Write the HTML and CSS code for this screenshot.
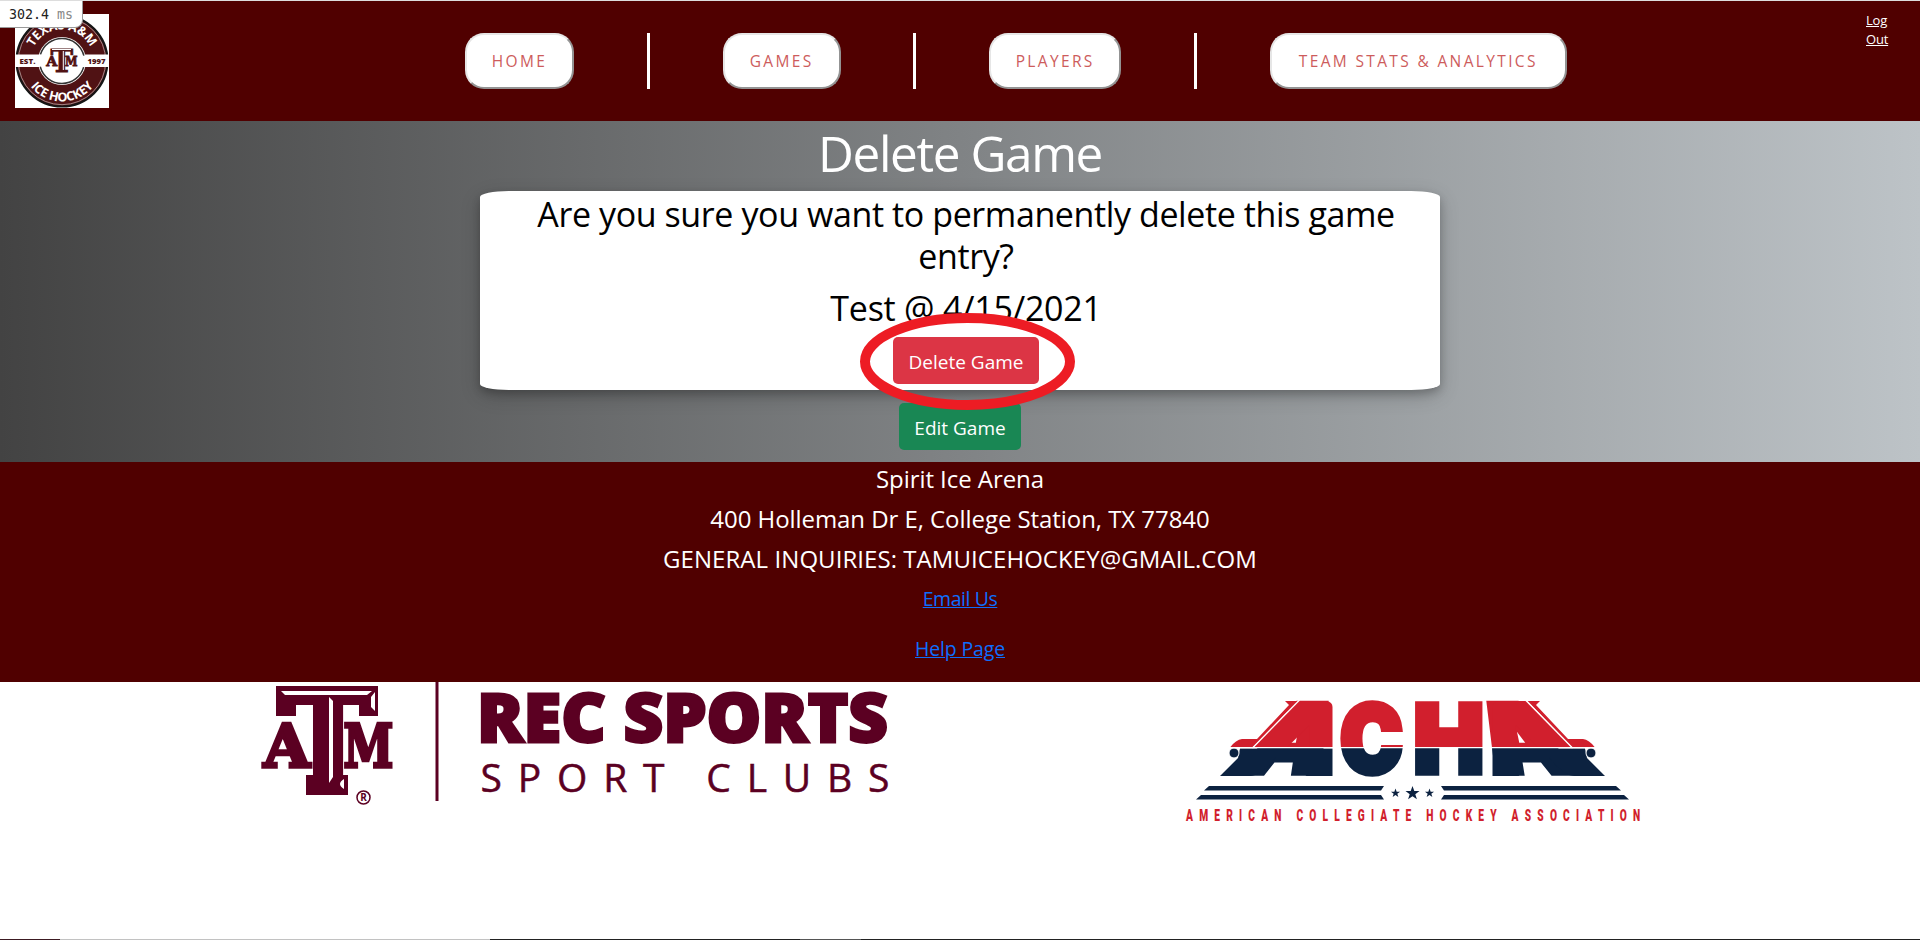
FILE: index.html
```html
<!DOCTYPE html>
<html lang="en">
<head>
<meta charset="utf-8">
<title>Delete Game</title>
<link rel="stylesheet" href="styles.css">
</head>
<body>
<div class="page">
  <div class="timer">302.4 <span class="timer-unit">ms</span></div>
  <header class="header">
    <svg class="team-logo" viewBox="0 0 94 94" role="img" aria-label="Texas A&amp;M Ice Hockey">
      <defs>
        <path id="arc-top" d="M15.500 47a31.500 31.500 0 0 1 63 0"/>
        <path id="arc-bottom" d="M6.500 47a40.500 40.500 0 0 0 81 0"/>
      </defs>
      <rect width="94" height="94" fill="#fff"/>
      <circle cx="47" cy="47" r="45.500" fill="#501214" stroke="#151515" stroke-width="2"/>
      <circle cx="47" cy="47" r="43.700" fill="none" stroke="#b9a5a5" stroke-width=".8"/>
      <rect x="0" y="40.500" width="94" height="12.500" fill="#fff"/>
      <circle cx="47" cy="47" r="24" fill="#fff"/>
      <circle cx="47" cy="47" r="22.500" fill="none" stroke="#333" stroke-width="1.500" stroke-dasharray="58 12.700" stroke-dashoffset="-6.300"/>
      <text class="ring-text"><textPath href="#arc-top" startOffset="50%">TEXAS A&amp;M</textPath></text>
      <text class="ring-text"><textPath href="#arc-bottom" startOffset="50%">ICE HOCKEY</textPath></text>
      <text class="ring-small" x="4.500" y="49.500" textLength="16" lengthAdjust="spacingAndGlyphs">EST.</text>
      <text class="ring-small" x="72.500" y="49.500" textLength="18" lengthAdjust="spacingAndGlyphs">1997</text>
      <g class="atm-small">
        <text transform="translate(31.300 52.300) scale(1.050 1)" font-size="13.500">A</text>
        <text transform="translate(50 52.300) scale(.84 1)" font-size="13.500">M</text>
        <text transform="translate(35.600 57.500) scale(.98 1)" font-size="31">T</text>
      </g>
      <path d="M37 35.500h19M48.300 37v19" stroke="#fff" stroke-width="1" fill="none"/>
    </svg>
    <nav class="nav">
      <a class="nav-button nav-home">HOME</a>
      <span class="nav-rule"></span>
      <a class="nav-button nav-games">GAMES</a>
      <span class="nav-rule"></span>
      <a class="nav-button nav-players">PLAYERS</a>
      <span class="nav-rule"></span>
      <a class="nav-button nav-stats">TEAM STATS &amp; ANALYTICS</a>
    </nav>
    <a class="logout">Log<br>Out</a>
  </header>

  <main class="main">
    <h1 class="title">Delete Game</h1>
    <section class="card">
      <h2 class="question">Are you sure you want to permanently delete this game<br>entry?</h2>
      <h2 class="game">Test @ 4/15/2021</h2>
      <div class="delete-wrap">
        <button class="btn btn-danger">Delete Game</button>
        <svg class="marker" viewBox="0 0 216 98"><ellipse cx="107.500" cy="48.500" rx="102.500" ry="43.500" fill="none" stroke="#ed1c24" stroke-width="10"/></svg>
      </div>
    </section>
    <button class="btn btn-success">Edit Game</button>
  </main>

  <footer class="footer">
    <p class="line arena">Spirit Ice Arena</p>
    <p class="line address">400 Holleman Dr E, College Station, TX 77840</p>
    <p class="line inquiries">GENERAL INQUIRIES: TAMUICEHOCKEY@GMAIL.COM</p>
    <a class="link email">Email Us</a>
    <a class="link help">Help Page</a>
  </footer>

  <div class="sponsors">
    <svg class="rec-logo" viewBox="262 682 630 130" role="img" aria-label="Texas A&amp;M Rec Sports Sport Clubs">
      <defs><clipPath id="stem-clip"><path d="M276 686h102v36h-30v73h-42v-73h-30z"/></clipPath></defs>
      <g class="atm">
        <text transform="translate(263.500 767)" font-size="60">A</text>
        <text transform="translate(343.500 767) scale(.75 1)" font-size="60">M</text>
        <g clip-path="url(#stem-clip)">
          <text transform="translate(275.500 793) scale(.98 1)" font-size="144">T</text>
        </g>
        <path stroke="none" d="M276 686h102v30h-19v-11h-63v11h-20zM306 775h42v20h-42z"/>
      </g>
      <path d="M281 691h91l-5 4h-82zM375 692v19l-4-4v-10zM329 697l4 4v76l-4 6zM344 779v10q-8-5 0-10z" fill="#fff"/>
      <circle cx="363.500" cy="797.500" r="6.500" fill="none" stroke="#5b0022" stroke-width="1.500"/>
      <text class="registered" x="360.300" y="801.300">R</text>
      <rect x="435.500" y="682" width="3" height="119" fill="#5b0022"/>
      <text class="rec" x="477" y="741.500" textLength="411" lengthAdjust="spacingAndGlyphs">REC SPORTS</text>
      <text class="clubs" x="480.500" y="792" textLength="409">SPORT CLUBS</text>
    </svg>
    <svg class="acha-logo" viewBox="1182 690 462 136" role="img" aria-label="American Collegiate Hockey Association">
      <defs>
        <linearGradient id="two-tone" gradientUnits="userSpaceOnUse" x1="0" y1="-100" x2="0" y2="100">
          <stop offset=".3655" stop-color="#d11f2d"/>
          <stop offset=".3655" stop-color="#0c2240"/>
        </linearGradient>
        <g id="wing">
          <path d="M1285 701h12.500l-45 46.500h-22.500q6-8 12-8.500h15l32-34z" fill="#d11f2d"/>
          <path d="M1298.500 701h28q6 1 6 6v40h-23v-22l-22 22h-34z" fill="#d11f2d"/>
          <path d="M1240 748.500h92.500v27.500h-27l3.500-4v-14.500h-33q-16 19-26 18.500h-30l18-18z" fill="#0c2240"/>
          <path d="M1299.500 700l-47 48" stroke="#fff" stroke-width="1.300"/>
          <circle cx="1234" cy="753" r="5" fill="#0c2240" stroke="#fff" stroke-width="1"/>
          <path d="M1209 786h175l-3 4.500h-177zM1201 795h180l3 4.500h-188z" fill="#0c2240"/>
        </g>
      </defs>
      <g class="acha">
        <text transform="matrix(1.030 0 -.45 .953 1238 773.100)">A</text>
        <text transform="matrix(.84 0 0 .953 1340 773.100)">C</text>
        <text transform="matrix(.94 0 0 .953 1413.500 773.100)">H</text>
        <text transform="matrix(1.030 0 .45 .953 1496 773.100)">A</text>
      </g>
      <use href="#wing"/>
      <use href="#wing" transform="translate(2825 0) scale(-1 1)"/>
      <path d="M1230 747.700h365" stroke="#fff" stroke-width="1.300"/>
      <g fill="#0c2240">
        <path id="star" d="M1412.500 786l1.800 5h5.200l-4.200 3.200 1.600 5-4.400-3-4.400 3 1.600-5-4.200-3.200h5.200z"/>
        <use href="#star" transform="translate(1395.500 793) scale(.65) translate(-1412.500 -793)"/>
        <use href="#star" transform="translate(1429.500 793) scale(.65) translate(-1412.500 -793)"/>
      </g>
      <text class="association" transform="translate(1186 821) scale(.6 1)" textLength="757">AMERICAN COLLEGIATE HOCKEY ASSOCIATION</text>
    </svg>
  </div>
  <div class="taskbar"><i class="seg seg-maroon"></i><i class="seg seg-light"></i><i class="seg seg-dark"></i><i class="seg seg-gray"></i><i class="seg seg-rest"></i></div>
</div>
</body>
</html>
```
FILE: styles.css
```css
* { box-sizing: border-box; }
body {
  margin: 0;
  background: #fff;
  font-family: "Open Sans", "Noto Sans", sans-serif;
}
.page {
  position: relative;
  display: flex;
  flex-direction: column;
  height: 940px;
  overflow: hidden;
  border-top: 1px solid #ddd;
}
.timer {
  position: absolute;
  left: 0;
  top: 0;
  z-index: 2;
  width: 83px;
  height: 27px;
  padding-left: 9px;
  border: solid #999;
  border-width: 0 1px 1px 0;
  border-radius: 0 0 8px 0;
  background: #fff;
  color: #222;
  font: 13.3px/27px "DejaVu Sans Mono", monospace;
  white-space: nowrap;
}
.timer-unit { color: #888; }

.header {
  display: flex;
  flex: none;
  height: 120px;
  padding: 13px 32px 0 15px;
  background: #500000;
}
.team-logo { flex: none; width: 94px; height: 94px; }
.ring-text {
  fill: #fff;
  font: 700 12.5px "Open Sans", sans-serif;
  letter-spacing: -.1px;
  text-anchor: middle;
}
.ring-small { fill: #501214; font: 800 6.5px "Open Sans", sans-serif; }
.atm-small {
  fill: #501214;
  stroke: #501214;
  stroke-width: .8px;
  font-family: "DejaVu Serif", serif;
  font-weight: 700;
}

.nav { display: flex; gap: 72.8px; height: 56px; margin: 19px 0 0 356px; }
.nav-button {
  height: 56px;
  border: 2px solid;
  border-color: #e6e6e6 #939393 #939393 #e6e6e6;
  border-radius: 19px;
  background: #fff;
  color: #cd5c5c;
  font-size: 15.5px;
  line-height: 53px;
  letter-spacing: 2.35px;
  text-align: center;
  white-space: nowrap;
}
.nav-home { width: 109px; }
.nav-games { width: 118px; }
.nav-players { width: 132px; }
.nav-stats { width: 297px; }
.nav-rule { width: 3px; background: #fff; }
.logout {
  width: 22px;
  margin: -3px 0 0 auto;
  color: #fff;
  font-size: 13px;
  letter-spacing: -.2px;
  line-height: 19px;
  text-decoration: underline;
}

.main {
  display: flex;
  flex: none;
  flex-direction: column;
  align-items: center;
  height: 341px;
  background: linear-gradient(to right, #434343, #bdc3c7);
}
.title {
  margin: 2px 0 8px;
  color: #fff;
  font-size: 49.5px;
  font-weight: 400;
  letter-spacing: -1.4px;
  line-height: 60px;
}
.card {
  display: flex;
  flex-direction: column;
  align-items: center;
  width: 960px;
  height: 199px;
  padding: 2px 0 0 12px;
  border-radius: 3%;
  background: #fff;
  box-shadow: 0 4px 8px rgba(0, 0, 0, .2), 0 6px 20px rgba(0, 0, 0, .19);
}
.question, .game {
  margin: 0 0 8px;
  color: #000;
  font-size: 34px;
  font-weight: 400;
  letter-spacing: -.4px;
  line-height: 42px;
  text-align: center;
  white-space: nowrap;
}
.game { margin: 2px 0 0; letter-spacing: -.25px; }
.delete-wrap { position: relative; margin-top: 8px; }
.marker { position: absolute; left: -33px; top: -24px; width: 216px; height: 98px; }
.btn {
  display: block;
  height: 47px;
  padding: 0;
  border: 0;
  border-radius: 5px;
  color: #fff;
  font-family: inherit;
  font-size: 19px;
  line-height: 51px;
  white-space: nowrap;
}
.btn-danger { width: 146px; background: #dc3545; }
.btn-success { width: 122px; margin-top: 13px; background: #198754; }

.footer {
  display: flex;
  flex: none;
  flex-direction: column;
  align-items: center;
  height: 220px;
  padding-top: 1px;
  background: #500000;
  color: #fff;
}
.line { margin: 0 0 8px; font-size: 24px; line-height: 32px; white-space: nowrap; }
.arena, .address { letter-spacing: -.06px; }
.inquiries { letter-spacing: .06px; }
.link { color: #0d6efd; font-size: 19.5px; line-height: 30px; text-decoration: underline; }
.email { margin: 1px 0 20px; letter-spacing: -.45px; }
.help { letter-spacing: -.15px; }

.sponsors { display: flex; flex: none; height: 257px; padding-left: 262px; }
.rec-logo { width: 630px; height: 130px; overflow: visible; }
.atm {
  fill: #5b0022;
  stroke: #5b0022;
  stroke-width: 3.5px;
  font-family: "DejaVu Serif", serif;
  font-weight: 700;
}
.registered { fill: #5b0022; font: 700 10px "Open Sans", sans-serif; }
.rec { fill: #5b0022; stroke: #5b0022; stroke-width: 2.8px; font: 800 67px "Open Sans", sans-serif; }
.clubs { fill: #5b0022; stroke: #5b0022; stroke-width: .5px; font: 400 39px "Open Sans", sans-serif; }
.acha-logo { width: 462px; height: 136px; margin: 8px 0 0 290px; overflow: visible; }
.acha {
  fill: url(#two-tone);
  stroke: url(#two-tone);
  stroke-width: 6px;
  font: 900 100px Inter, sans-serif;
}
.association { fill: #d11f2d; font: 900 17px Roboto, sans-serif; }

.taskbar { display: flex; flex: none; height: 1px; background: #222; }
.seg { height: 1px; }
.seg-maroon { width: 60px; background: #3c1a22; }
.seg-light { width: 430px; background: #c2c2c2; }
.seg-dark { width: 310px; background: #222; }
.seg-gray { width: 61px; background: #555; }
.seg-rest { flex: 1; background: #222; }
```
